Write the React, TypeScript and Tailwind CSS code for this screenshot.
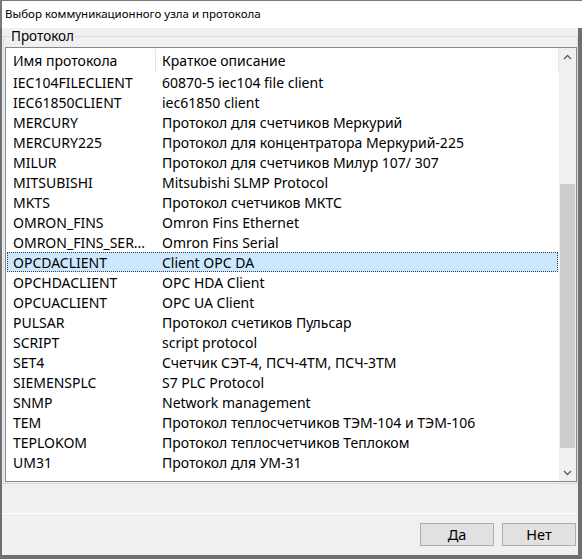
import React from "react";

const rows: [string, string][] = [
  ["IEC104FILECLIENT", "60870-5 iec104 file client"],
  ["IEC61850CLIENT", "iec61850 client"],
  ["MERCURY", "Протокол для счетчиков Меркурий"],
  ["MERCURY225", "Протокол для концентратора Меркурий-225"],
  ["MILUR", "Протокол для счетчиков Милур 107/ 307"],
  ["MITSUBISHI", "Mitsubishi SLMP Protocol"],
  ["MKTS", "Протокол счетчиков МКТС"],
  ["OMRON_FINS", "Omron Fins Ethernet"],
  ["OMRON_FINS_SER...", "Omron Fins Serial"],
  ["OPCDACLIENT", "Client OPC DA"],
  ["OPCHDACLIENT", "OPC HDA Client"],
  ["OPCUACLIENT", "OPC UA Client"],
  ["PULSAR", "Протокол счетиков Пульсар"],
  ["SCRIPT", "script protocol"],
  ["SET4", "Счетчик СЭТ-4, ПСЧ-4ТМ, ПСЧ-3ТМ"],
  ["SIEMENSPLC", "S7 PLC Protocol"],
  ["SNMP", "Network management"],
  ["TEM", "Протокол теплосчетчиков ТЭМ-104 и ТЭМ-106"],
  ["TEPLOKOM", "Протокол теплосчетчиков Теплоком"],
  ["UM31", "Протокол для УМ-31"],
];

function Chevron({ up }: { up?: boolean }) {
  return (
    <svg width="9" height="6" viewBox="0 0 9 6">
      <path
        d={up ? "M1 5 L4.5 1.5 L8 5" : "M1 1 L4.5 4.5 L8 1"}
        fill="none"
        stroke="#606060"
        strokeWidth="1.4"
      />
    </svg>
  );
}

export default function App() {
  return (
    <div
      className="w-[582px] h-[559px] flex flex-col text-[14px] text-black leading-none"
      style={{ fontFamily: '"Noto Sans", "Open Sans", sans-serif' }}
    >
      <div className="h-[28px] shrink-0 bg-white border-t border-l-2 border-[#7a7a7a] flex items-center pl-[3px] pb-[1px] text-[11.5px]">
        Выбор коммуникационного узла и протокола
      </div>
      <div className="flex-1 flex flex-col bg-[#f0f0f0] border-l-2 border-r-4 border-b-4 border-[#6f6f6f]">
        <div className="relative mt-[8px] ml-[1px] w-[575px] h-[448px] border border-[#dcdcdc] pt-[10px] pl-[1px]">
          <div className="absolute left-[6px] top-[-8px] bg-[#f0f0f0] px-[1px] leading-[15px] text-[13.5px]">
            Протокол
          </div>
          <div className="w-[572px] h-[435px] border border-[#828790] bg-white flex">
            <div className="flex-1 flex flex-col">
              <div className="h-[24px] flex items-center border-r border-[#e5e5e5] pt-[1px]">
                <div className="w-[150px] h-full flex items-center pl-[7px] border-r border-[#e5e5e5]">
                  Имя протокола
                </div>
                <div className="pl-[6px]">Краткое описание</div>
              </div>
              {rows.map(([name, desc]) => {
                const sel = name === "OPCDACLIENT";
                return (
                  <div
                    key={name}
                    className={
                      sel
                        ? "h-[20px] mx-[1px] flex items-center pt-[1px] bg-[#cce8ff] border border-dotted border-[#404040]"
                        : "h-[20px] mx-[1px] flex items-center pt-[1px] border border-transparent"
                    }
                  >
                    <div className="w-[148px] pl-[5px] whitespace-nowrap">{name}</div>
                    <div className="pl-[6px] whitespace-nowrap">{desc}</div>
                  </div>
                );
              })}
            </div>
            <div className="w-[17px] bg-[#f0f0f0] flex flex-col">
              <div className="h-[17px] flex items-center justify-center">
                <Chevron up />
              </div>
              <div className="h-[119px]" />
              <div className="h-[264px] mx-[1px] bg-[#cdcdcd]" />
              <div className="flex-1" />
              <div className="h-[17px] flex items-center justify-center">
                <Chevron />
              </div>
            </div>
          </div>
        </div>
        <div className="h-[29px]" />
        <div className="flex-1 border-t border-white flex justify-end items-start pt-[9px] pr-[2px] gap-[8px]">
          <button className="w-[74px] h-[23px] bg-[#e1e1e1] border border-[#adadad] flex items-center justify-center text-[14.5px]">
            Да
          </button>
          <button className="w-[74px] h-[23px] bg-[#e1e1e1] border border-[#adadad] flex items-center justify-center text-[14.5px]">
            Нет
          </button>
        </div>
      </div>
    </div>
  );
}
